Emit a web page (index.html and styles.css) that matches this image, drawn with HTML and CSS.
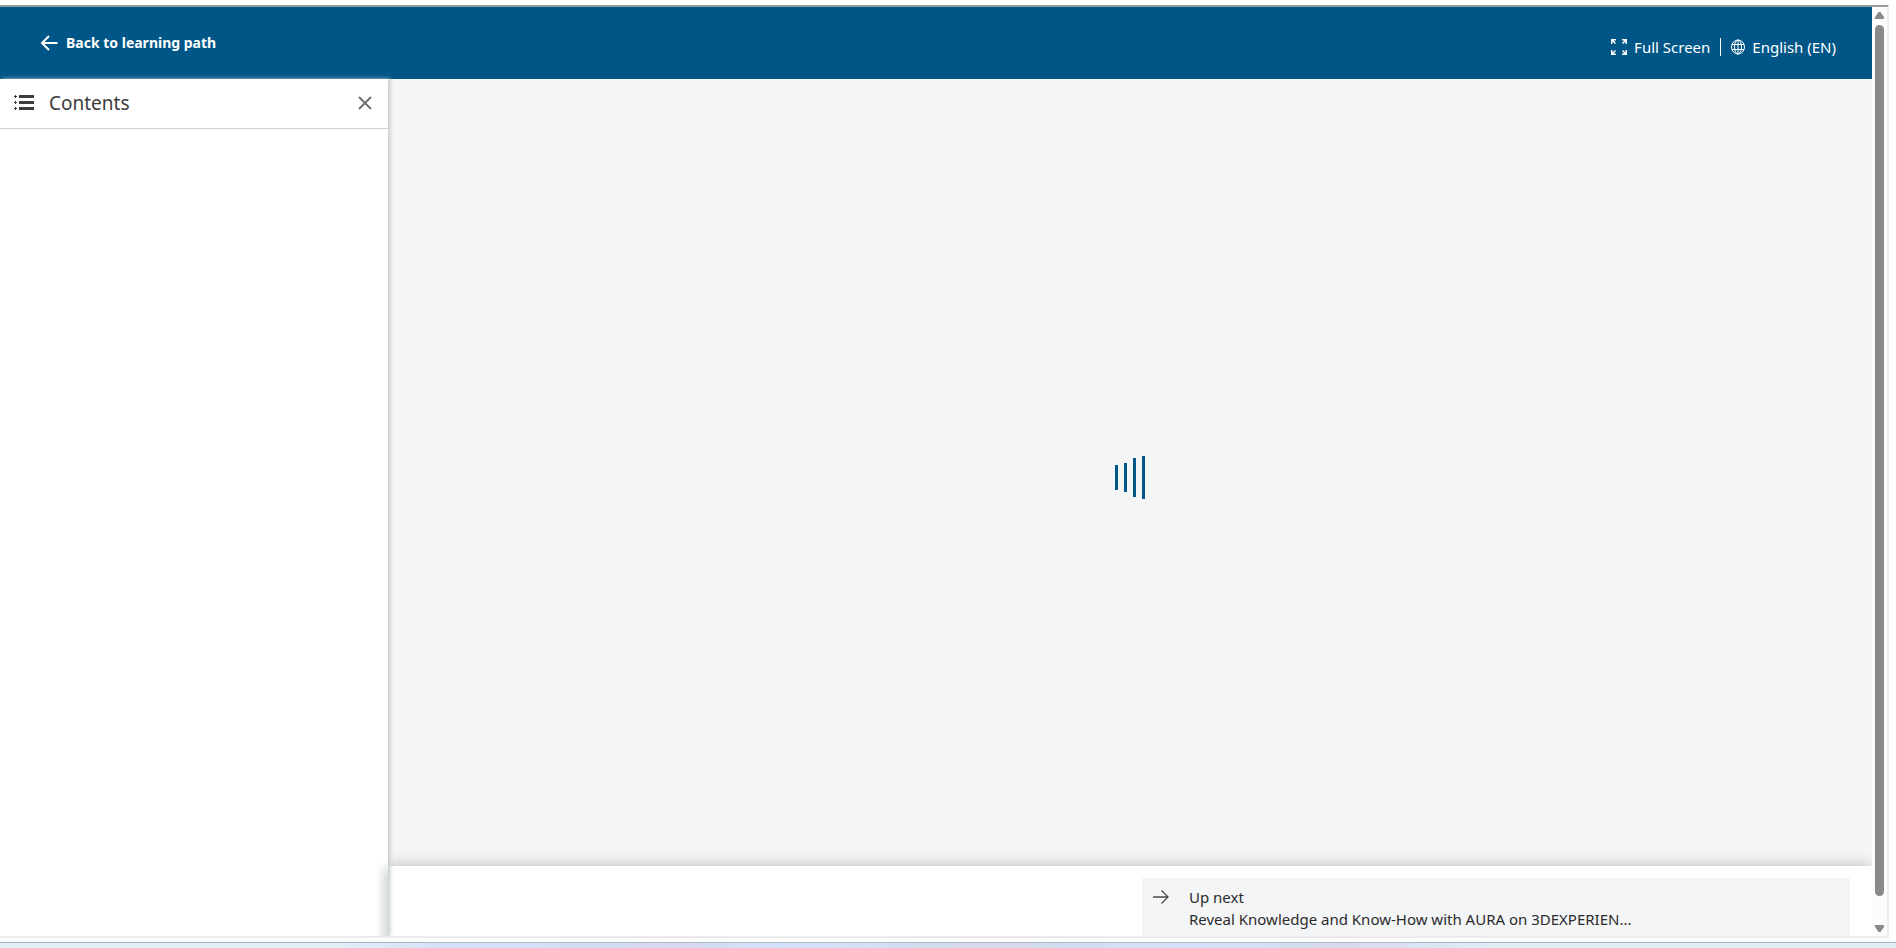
FILE: index.html
```html
<!DOCTYPE html>
<html lang="en">
<head>
<meta charset="utf-8">
<title>Learning path</title>
<link rel="stylesheet" href="styles.css">
</head>
<body>
<div class="window">
  <div class="page">
    <header class="topbar">
      <a class="back" href="#">
        <svg width="18" height="16" viewBox="0 0 18 16" fill="none" stroke="currentColor" stroke-width="2"><path d="M17.500 8H1.500M9 1L2 8l7 7"/></svg>
        <span>Back to learning path</span>
      </a>
      <nav class="tools">
        <button class="tool" type="button">
          <svg width="16" height="16" viewBox="0 0 16 16" fill="currentColor"><path d="M0 0h5v1.500H2.600L5 4 4 5 1.500 2.600V5H0zM16 0v5h-1.500V2.600L12 5l-1-1 2.400-2.500H11V0zM0 16v-5h1.500v2.400L4 11l1 1-2.400 2.500H5V16zM16 16h-5v-1.500h2.400L11 12l1-1 2.500 2.400V11H16z"/></svg>
          <span>Full Screen</span>
        </button>
        <span class="divider"></span>
        <button class="tool language" type="button">
          <svg width="14" height="16" viewBox="0 0 14 16" fill="none" stroke="currentColor"><ellipse cx="7" cy="8" rx="6.500" ry="7"/><ellipse cx="7" cy="8" rx="3.500" ry="7"/><path d="M7 1v14M1 5.500h12M1 10.500h12"/></svg>
          <span>English (EN)</span>
        </button>
      </nav>
    </header>
    <aside class="sidebar">
      <div class="sidebar-head">
        <svg width="20" height="15" viewBox="0 0 20 15" fill="#3d3d3d"><path d="M5 0h15v3H5zM5 6h15v3H5zM5 12h15v3H5zM1 0h1v1h1v1H2v1H1V2H0V1h1zM1 6h1v1h1v1H2v1H1V8H0V7h1zM1 12h1v1h1v1H2v1H1v-1H0v-1h1z"/></svg>
        <h1>Contents</h1>
        <button class="close" type="button" aria-label="Close">
          <svg width="14" height="14" viewBox="0 0 14 14" fill="none" stroke="currentColor" stroke-width="1.800"><path d="M1 1l12 12M13 1L1 13"/></svg>
        </button>
      </div>
    </aside>
    <main class="player">
      <svg class="loader" width="30" height="43" viewBox="0 0 30 43" fill="#005686"><path d="M0 9h3v25H0zM9 7h3v29H9zM18 2h3v39h-3zM27 0h3v43h-3z"/></svg>
    </main>
    <footer class="footer">
      <a class="next" href="#">
        <svg width="16" height="14" viewBox="0 0 16 14" fill="none" stroke="#4a4a4a" stroke-width="1.300"><path d="M0 7h15M8.500 .5L15 7l-6.500 6.500"/></svg>
        <span class="next-text"><span>Up next</span><span>Reveal Knowledge and Know-How with AURA on 3DEXPERIEN...</span></span>
      </a>
    </footer>
  </div>
  <div class="scrollbar">
    <svg width="9" height="7" viewBox="0 0 9 7" fill="#8a8a8a"><path d="M3.500 0h2L9 5v2H0V5z"/></svg>
    <div class="thumb"></div>
    <svg width="9" height="7" viewBox="0 0 9 7" fill="#8a8a8a"><path d="M0 0h9v2L5.500 7h-2L0 2z"/></svg>
  </div>
</div>
<div class="desktop"></div>
</body>
</html>
```
FILE: styles.css
```css
* {
  box-sizing: border-box;
}

body {
  margin: 0;
  min-height: 100vh;
  padding-top: 5px;
  display: flex;
  flex-direction: column;
  background: #fff;
  color: #2b2b2b;
  font: 15px/22px "Noto Sans", sans-serif;
}

a {
  color: inherit;
  text-decoration: none;
}

button {
  padding: 0;
  border: 0;
  background: none;
  color: inherit;
  font: inherit;
  cursor: pointer;
}

svg {
  display: block;
  flex: none;
}

.window {
  flex: 1;
  display: flex;
  margin-right: 7px;
  border: solid #ececec;
  border-width: 2px 2px 2px 0;
  border-top-color: #959b9f;
}

.page {
  flex: 1;
  display: grid;
  grid-template: 72px 1fr 70px / 388px 1fr;
  overflow: hidden;
}

.topbar {
  grid-column: 1 / -1;
  display: flex;
  justify-content: space-between;
  align-items: center;
  padding: 0 36px 0 40px;
  background: #005686;
  color: #fff;
}

.back {
  display: flex;
  align-items: center;
  gap: 8px;
  font-size: 14px;
  font-weight: 700;
}

.tools {
  display: flex;
  align-items: center;
  padding-top: 8px;
}

.tool {
  display: flex;
  align-items: center;
  gap: 7px;
}

.divider {
  width: 1px;
  height: 18px;
  margin: 0 10px;
  background: #fff;
}

.sidebar {
  position: relative;
  grid-row: 2 / 4;
  z-index: 1;
  background: #fff;
  box-shadow: 2px 0 4px #c3c9ca;
}

.sidebar::after {
  content: "";
  position: absolute;
  right: 0;
  bottom: 0;
  width: 12px;
  height: 76px;
  background: linear-gradient(90deg, transparent, #d9dddc);
  mask: linear-gradient(transparent, #000 16px);
}

.sidebar-head {
  height: 50px;
  display: flex;
  align-items: center;
  padding: 0 16px 2px 14px;
  border-bottom: 1px solid #d1d1d1;
}

h1 {
  flex: 1;
  margin: 0 0 0 15px;
  color: #3d3d3d;
  font-size: 19px;
  font-weight: 400;
}

.close {
  color: #6b6b6b;
}

.player {
  display: flex;
  align-items: center;
  justify-content: center;
  padding-top: 10px;
  background: #f3f5f7;
}

.footer {
  display: flex;
  justify-content: flex-end;
  padding: 12px 22px 0 0;
  background: #fff;
  box-shadow: 0 0 14px rgba(0, 0, 0, 0.250);
}

.next {
  width: calc(50% - 23px);
  display: flex;
  gap: 20px;
  padding: 8px 11px 0;
  background: #f4f5f7;
}

.next svg {
  margin-top: 4px;
}

.next-text {
  display: flex;
  flex-direction: column;
  white-space: nowrap;
}

.scrollbar {
  width: 15px;
  display: flex;
  flex-direction: column;
  align-items: center;
  gap: 6px;
  padding: 5px 0 4px;
  background: #fcfcfc;
}

.thumb {
  flex: 1;
  width: 9px;
  margin-bottom: 23px;
  border-radius: 5px;
  background: #8a8a8a;
}

.desktop {
  height: 6px;
  margin-top: 4px;
  border-top: 1px solid #afb7c3;
  background: linear-gradient(90deg, #e3ecf7 18%, #d3e0fa 24%, #d7daf2 36%, #d2e1fb 41%, #d6daee 52%, #d4e0fa 63%, #d7dbee 71%, #e1ecf7 79%);
}
```
